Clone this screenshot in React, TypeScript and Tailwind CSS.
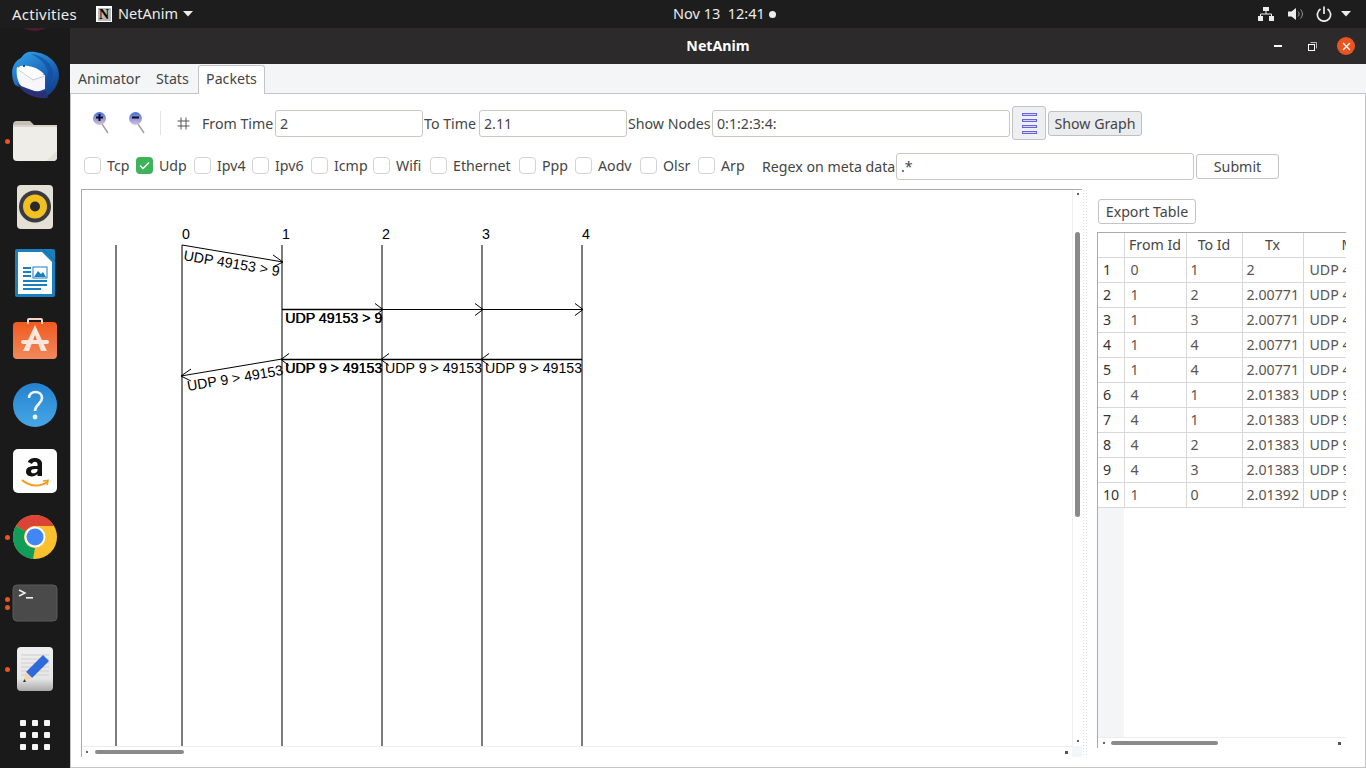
import React from "react";

const Dot = ({ y }: { y: string }) => (
  <span className={`absolute left-[5px] w-[5px] h-[5px] rounded-full bg-[#e95420] ${y}`} />
);

function Thunderbird() {
  return (
    <svg width="48" height="48" viewBox="0 0 48 48">
      <defs>
        <linearGradient id="tb" x1="0.2" y1="0" x2="0.8" y2="1"><stop offset="0" stopColor="#2f9fe6" /><stop offset="0.6" stopColor="#1b5fb4" /><stop offset="1" stopColor="#123a80" /></linearGradient>
      </defs>
      <path d="M17 1 C30 -1 48 8 48 24 C48 34 42 42 33 47 L22 42 L4 34 C-1 24 0 12 10 7 C12 4 14 2 17 1Z" fill="url(#tb)" />
      <path d="M20 3 C30 4 39 10 42 20 C42 30 38 38 34 43 L37 20 C33 10 26 6 20 3Z" fill="#0f4c9c" opacity="0.6" />
      <path d="M6 16 L23 21 L34 24 L34 38 L26 41 L10 35 C6 30 5 22 6 16Z" fill="#f7f7fb" />
      <path d="M8 19 L22 29 L34 25" fill="none" stroke="#c9c9dc" strokeWidth="1" />
      <path d="M9 15 C16 14 25 15 33 23 L22 28 L7 18Z" fill="#ffffff" />
      <path d="M6 32 C13 38 24 42 35 40 L37 47 C24 48 11 43 6 32Z" fill="#2a2f76" />
      <circle cx="13" cy="15" r="1" fill="#12264f" />
    </svg>
  );
}
function Files() {
  return (
    <svg width="46" height="42" viewBox="0 0 46 42">
      <path d="M1 5 a4 4 0 0 1 4-4 h13 l4 4 h20 a3 3 0 0 1 3 3 v4 H1Z" fill="#c5c0b3" />
      <rect x="1" y="5" width="44" height="36" rx="4" fill="#efede8" />
      <rect x="1" y="5" width="44" height="2" fill="#d8d4ca" />
      <path d="M34 41 L45 31 V37 a4 4 0 0 1-4 4Z" fill="#e3e0da" />
    </svg>
  );
}
function Rhythmbox() {
  return (
    <svg width="38" height="46" viewBox="0 0 38 46">
      <rect x="1" y="1" width="36" height="44" rx="4" fill="#e4e0d6" />
      <circle cx="19" cy="22.5" r="16" fill="#3a3a42" />
      <circle cx="19" cy="22.5" r="12" fill="#f0c11f" />
      <circle cx="19" cy="22.5" r="5" fill="#2a2a2a" />
    </svg>
  );
}
function Writer() {
  return (
    <svg width="40" height="48" viewBox="0 0 40 48">
      <path d="M2 0 H28 L40 12 V46 a2 2 0 0 1-2 2 H2 a2 2 0 0 1-2-2 V2 a2 2 0 0 1 2-2Z" fill="#1a7fbd" />
      <path d="M3 3 H27 L37 13 V45 H3Z" fill="#fdfdfd" />
      <path d="M28 0 H38 a2 2 0 0 1 2 2 V12Z" fill="#1a7fbd" />
      <rect x="8" y="18" width="8" height="2" fill="#1a7fbd" />
      <rect x="8" y="22" width="8" height="2" fill="#1a7fbd" />
      <rect x="8" y="26" width="8" height="2" fill="#1a7fbd" />
      <rect x="18" y="18" width="14" height="11" fill="#fff" stroke="#1a7fbd" />
      <path d="M19 28 L23 22 L26 25 L28 23 L31 28Z" fill="#1a7fbd" />
      <rect x="8" y="31" width="24" height="2" fill="#1a7fbd" />
      <rect x="8" y="35" width="24" height="2" fill="#1a7fbd" />
      <rect x="8" y="39" width="18" height="2" fill="#1a7fbd" />
    </svg>
  );
}
function Software() {
  return (
    <svg width="46" height="42" viewBox="0 0 46 42">
      <defs><linearGradient id="sw" x1="0" y1="0" x2="0" y2="1"><stop offset="0" stopColor="#f05a1e" /><stop offset="1" stopColor="#f0895c" /></linearGradient></defs>
      <rect x="1" y="4" width="44" height="37" rx="4" fill="url(#sw)" />
      <path d="M16 6 V2 a1 1 0 0 1 1-1 H29 a1 1 0 0 1 1 1 V6" fill="none" stroke="#f6d6c8" strokeWidth="2" />
      <path d="M23 7 L35 33 H29 L23 17 L17 33 H11 Z" fill="#fbe6dc" />
      <rect x="9" y="22" width="28" height="4" rx="2" fill="#fbe6dc" />
    </svg>
  );
}
function Help() {
  return (
    <svg width="46" height="46" viewBox="0 0 46 46">
      <defs><linearGradient id="hp" x1="0" y1="0" x2="0" y2="1"><stop offset="0" stopColor="#2482d0" /><stop offset="1" stopColor="#46a7e6" /></linearGradient></defs>
      <circle cx="23" cy="23" r="22" fill="url(#hp)" />
      <path d="M17 16 C17 8 30 8 30 16 C30 22 23 22 23 29" fill="none" stroke="#eef6fc" strokeWidth="2.6" />
      <circle cx="23" cy="35" r="2.4" fill="#eef6fc" />
    </svg>
  );
}
function Amazon() {
  return (
    <svg width="46" height="46" viewBox="0 0 46 46">
      <rect x="1" y="1" width="44" height="44" rx="5" fill="#fdfdfd" />
      <path d="M16 14 C17 9 29 8 30 15 V28 H25.5 V26 C22 30 14 29 14 23.5 C14 18 21 18 25.5 18 V16 C25 13 21 13 20 16Z M25.5 21 C22 21 19 21 19 23.5 C19 26 24 26 25.5 23Z" fill="#111" />
      <path d="M10 32 C18 39 28 39 35 34" fill="none" stroke="#f59c1a" strokeWidth="2" />
      <path d="M31 33 L36 32.5 L35 37" fill="none" stroke="#f59c1a" strokeWidth="1.6" />
    </svg>
  );
}
function Chrome() {
  return (
    <svg width="46" height="46" viewBox="0 0 46 46">
      <circle cx="23" cy="23" r="22" fill="#fbc02d" />
      <path d="M23 1 A22 22 0 0 1 42.05 12 H23 A11 11 0 0 0 13.5 17.5 L4 12 A22 22 0 0 1 23 1Z" fill="#db4437" />
      <path d="M4 12 L13.5 17.5 A11 11 0 0 0 23 34 L21 45 A22 22 0 0 1 4 12Z" fill="#0f9d58" />
      <circle cx="23" cy="23" r="10.5" fill="#fff" />
      <circle cx="23" cy="23" r="8.5" fill="#4285f4" />
    </svg>
  );
}
function Terminal() {
  return (
    <svg width="46" height="38" viewBox="0 0 46 38">
      <rect x="1" y="1" width="44" height="36" rx="4" fill="#4a4a4a" stroke="#5a5a5a" />
      <path d="M7 6 L13 9 L7 12" fill="none" stroke="#f0f0f0" strokeWidth="1.5" />
      <rect x="14" y="13" width="7" height="1.6" fill="#f0f0f0" />
    </svg>
  );
}
function Editor() {
  return (
    <svg width="38" height="46" viewBox="0 0 38 46">
      <defs><linearGradient id="ed" x1="0" y1="0" x2="0" y2="1"><stop offset="0" stopColor="#efefef" /><stop offset="0.72" stopColor="#e6e6e6" /><stop offset="1" stopColor="#a8a8a8" /></linearGradient></defs>
      <rect x="1" y="1" width="36" height="44" rx="4" fill="url(#ed)" />
      <path d="M5 9 H33 M5 13 H33 M5 17 H33 M5 21 H33 M5 25 H33 M5 29 H33" stroke="#cfcfcf" />
      <path d="M27 9 L33 15 L16 32 L10 26Z" fill="#2f6bd8" />
      <path d="M10 26 L16 32 L7 36Z" fill="#f3d3b0" />
      <path d="M8.5 33 L10 36 L7 36Z" fill="#333" />
    </svg>
  );
}
function AppGrid() {
  return (
    <div className="grid grid-cols-3 gap-x-[6px] gap-y-[6px]">
      {[0, 1, 2, 3, 4, 5, 6, 7, 8].map((i) => (
        <span key={i} className="w-[6px] h-[6px] rounded-[1px] bg-[#f5f5f5]" />
      ))}
    </div>
  );
}

function Lens({ minus }: { minus?: boolean }) {
  return (
    <svg width="18" height="24" viewBox="0 0 18 24">
      <defs><linearGradient id={minus ? "l2" : "l1"} x1="0" y1="0" x2="0" y2="1"><stop offset="0" stopColor="#4a6fd8" /><stop offset="1" stopColor="#d4c0dc" /></linearGradient></defs>
      <path d="M10 13 L16 22" stroke="#a89a9a" strokeWidth="1.4" />
      <circle cx="7.5" cy="7.5" r="6.5" fill={`url(#${minus ? "l2" : "l1"})`} />
      <path d={minus ? "M4 6.5 H11" : "M4 6.5 H11 M7.5 3 V10"} stroke="#0c0c24" strokeWidth="2" />
    </svg>
  );
}

const boxes = [
  { label: "Tcp", cls: "w-[52px]" },
  { label: "Udp", cls: "w-[58px]", on: true },
  { label: "Ipv4", cls: "w-[58px]" },
  { label: "Ipv6", cls: "w-[59px]" },
  { label: "Icmp", cls: "w-[62px]" },
  { label: "Wifi", cls: "w-[57px]" },
  { label: "Ethernet", cls: "w-[89px]" },
  { label: "Ppp", cls: "w-[56px]" },
  { label: "Aodv", cls: "w-[65px]" },
  { label: "Olsr", cls: "w-[58px]" },
  { label: "Arp", cls: "w-[64px]" },
];

const rows = [
  ["1", "0", "1", "2", "UDP 49153 > 9"],
  ["2", "1", "2", "2.00771", "UDP 49153 > 9"],
  ["3", "1", "3", "2.00771", "UDP 49153 > 9"],
  ["4", "1", "4", "2.00771", "UDP 49153 > 9"],
  ["5", "1", "4", "2.00771", "UDP 49153 > 9"],
  ["6", "4", "1", "2.01383", "UDP 9 > 49153"],
  ["7", "4", "1", "2.01383", "UDP 9 > 49153"],
  ["8", "4", "2", "2.01383", "UDP 9 > 49153"],
  ["9", "4", "3", "2.01383", "UDP 9 > 49153"],
  ["10", "1", "0", "2.01392", "UDP 9 > 49153"],
];

const cellPad = ["pl-[6px]", "pl-[4px]", "pl-[4px]", "pl-[6px]"];

const Field = ({ value, cls }: { value: string; cls: string }) => (
  <div className={`h-[27px] bg-white border border-[#cdc7c2] rounded-[3px] pl-[4px] flex items-center whitespace-nowrap ${cls}`}>{value}</div>
);

const mono = { fontFamily: "'Liberation Sans', sans-serif", fontSize: 14.2 } as const;

function Diagram() {
  const head = (x: number, y: number, dir: number) => (
    <path d={`M${x - 8 * dir} ${y - 6} L${x} ${y} L${x - 8 * dir} ${y + 6}`} fill="none" stroke="#000" />
  );
  return (
    <svg width="990" height="556" viewBox="82 190 990 556" className="block">
      {[116, 182, 282, 382, 482, 582].map((x) => (
        <line key={x} x1={x} y1="245" x2={x} y2="746" stroke="#7d7d7d" strokeWidth="2" />
      ))}
      {["0", "1", "2", "3", "4"].map((t, i) => (
        <text key={t} x={182 + i * 100} y="239" style={mono}>{t}</text>
      ))}
      <line x1="182" y1="245" x2="283" y2="262" stroke="#000" />
      <path d="M273 255 L283 262 L273 267" fill="none" stroke="#000" />
      <text transform="translate(183 260) rotate(9.6)" style={mono}>UDP 49153 &gt; 9</text>

      <line x1="282" y1="309.5" x2="582" y2="309.5" stroke="#000" />
      <line x1="282" y1="309.5" x2="382" y2="309.5" stroke="#000" strokeWidth="1.6" />
      {head(383, 309.5, 1)}
      {head(483, 309.5, 1)}
      {head(583, 309.5, 1)}
      <text x="285" y="323" style={mono}>UDP 49153 &gt; 9</text>
      <text x="285.4" y="323" style={mono}>UDP 49153 &gt; 9</text>

      <line x1="282" y1="359.5" x2="582" y2="359.5" stroke="#000" strokeWidth="1.6" />
      {head(481, 359.5, -1)}
      {head(381, 359.5, -1)}
      {head(281, 359.5, -1)}
      <text x="285" y="373" style={mono}>UDP 9 &gt; 49153</text>
      <text x="285.4" y="373" style={mono}>UDP 9 &gt; 49153</text>
      <text x="385" y="373" style={mono}>UDP 9 &gt; 49153</text>
      <text x="485" y="373" style={mono}>UDP 9 &gt; 49153</text>

      <line x1="282" y1="359" x2="181" y2="376" stroke="#000" />
      <path d="M191 369 L181 376 L191 381" fill="none" stroke="#000" />
      <text transform="translate(188 391) rotate(-9.6)" style={mono}>UDP 9 &gt; 49153</text>
    </svg>
  );
}

export default function App() {
  return (
    <div className="w-[1366px] h-[768px] overflow-hidden flex flex-col bg-[#1d1d1d] text-[#454545] text-[14.2px] [font-family:'Noto_Sans',sans-serif]">
      {/* top bar */}
      <div className="h-[28px] shrink-0 bg-[#1d1d1d] text-[#ececec] text-[14.5px] flex items-center relative">
        <span className="ml-[12px] w-[84px] text-[15px] tracking-[0.25px]">Activities</span>
        <span className="w-[16px] h-[16px] bg-white flex items-center justify-center">
          <span className="w-[13px] h-[13px] bg-[#b8b8b8] text-black text-[14px] leading-[13px] font-bold flex items-center justify-center [font-family:'Liberation_Serif',serif]">N</span>
        </span>
        <span className="ml-[6px]">NetAnim</span>
        <svg className="ml-[5px]" width="10" height="6" viewBox="0 0 10 6"><path d="M0 0 H10 L5 5.5Z" fill="#ececec" /></svg>
        <div className="absolute left-[673px] top-0 h-[28px] flex items-center whitespace-pre">
          <span>Nov 13  12:41</span>
          <span className="ml-[4px] w-[7px] h-[7px] rounded-full bg-[#ececec]" />
        </div>
        <div className="ml-auto mr-[15px] flex items-center">
          <svg width="16" height="14" viewBox="0 0 16 14" fill="#ececec"><rect x="5" y="0" width="6" height="4" /><rect x="0" y="9" width="5" height="5" /><rect x="11" y="9" width="5" height="5" /><path d="M8 4 V7 M2.5 9 V7 H13.5 V9" stroke="#ececec" fill="none" /></svg>
          <svg className="ml-[14px]" width="16" height="14" viewBox="0 0 16 14"><path d="M0 4.5 H3.5 L8 1 V13 L3.5 9.5 H0Z" fill="#ececec" /><path d="M10 4.5 C11.5 6 11.5 8 10 9.5 M12.5 2.5 C15 5 15 9 12.5 11.5" stroke="#ececec" fill="none" opacity="0.6" /></svg>
          <svg className="ml-[12px]" width="16" height="16" viewBox="0 0 16 16"><path d="M4.5 3 A6.6 6.6 0 1 0 11.5 3" fill="none" stroke="#ececec" strokeWidth="1.7" /><path d="M8 0.5 V8" stroke="#ececec" strokeWidth="1.7" /></svg>
          <svg className="ml-[9px]" width="10" height="6" viewBox="0 0 10 6"><path d="M0 0 H10 L5 5.5Z" fill="#ececec" /></svg>
        </div>
      </div>

      <div className="flex-1 flex min-h-0">
        {/* dock */}
        <div className="w-[70px] shrink-0 bg-[#1a1a1a] flex flex-col overflow-hidden relative">
          <div className="h-[66px] shrink-0 -mt-[52px] flex items-center justify-center"><span className="w-[44px] h-[44px] rounded-full bg-[#4a1c33]" /></div>
          {[
            <Thunderbird />, <Files />, <Rhythmbox />, <Writer />, <Software />, <Help />, <Amazon />, <Chrome />, <Terminal />, <Editor />, <AppGrid />,
          ].map((icon, i) => (
            <div key={i} className="h-[66px] shrink-0 flex items-center justify-center">{icon}</div>
          ))}
          <Dot y="top-[111px]" />
          <Dot y="top-[507px]" />
          <Dot y="top-[569px]" />
          <Dot y="top-[577px]" />
          <Dot y="top-[639px]" />
        </div>

        {/* window */}
        <div className="flex-1 flex flex-col min-w-0">
          <div className="h-[36px] shrink-0 bg-[#2c2a2b] text-white font-bold flex items-center relative pb-[1px]">
            <span className="mx-auto">NetAnim</span>
            <span className="absolute left-[1204px] top-[17px] w-[8px] h-[2px] bg-white" />
            <svg className="absolute left-[1238px] top-[14px]" width="9" height="9" viewBox="0 0 9 9"><path d="M2.5 0.5 H8.5 V6.5" fill="none" stroke="#bbb" /><rect x="0.5" y="2.5" width="6" height="6" fill="none" stroke="#fff" /></svg>
            <span className="absolute left-[1267px] top-[9px] w-[18px] h-[18px] rounded-full bg-[#e95420] flex items-center justify-center">
              <svg width="9" height="9" viewBox="0 0 9 9"><path d="M1 1 L8 8 M8 1 L1 8" stroke="#fff" strokeWidth="1.3" /></svg>
            </span>
          </div>

          {/* tabs */}
          <div className="h-[29px] shrink-0 bg-[#f4f5f6] flex items-end relative">
            <span className="ml-[8px] w-[78px] h-[28px] flex items-center">Animator</span>
            <span className="w-[42px] h-[28px] flex items-center">Stats</span>
            <span className="w-[67px] h-[29px] -mb-px bg-white border border-b-0 border-[#c3c3c8] rounded-t-[3px] flex items-center justify-center z-10 pb-[3px]">Packets</span>
          </div>

          {/* pane */}
          <div className="flex-1 min-h-0 bg-white border-l border-t border-b border-r border-[#c3c3c8] flex flex-col">
            <div className="h-[34px] mt-[12px] shrink-0 flex items-center">
              <span className="ml-[21px] w-[18px]"><Lens /></span>
              <span className="ml-[18px] w-[18px]"><Lens minus /></span>
              <span className="ml-[14px] w-px h-[24px] bg-[#e4e4e4]" />
              <svg className="ml-[16px]" width="13" height="13" viewBox="0 0 13 13"><path d="M4 0.5 V12.5 M9 0.5 V12.5 M0.5 4 H12.5 M0.5 9 H12.5" stroke="#555" /></svg>
              <span className="ml-[12px] w-[73px] pt-[2px] whitespace-nowrap">From Time</span>
              <Field value="2" cls="w-[148px] pt-[2px]" />
              <span className="ml-[1px] w-[55px] pt-[2px] whitespace-nowrap">To Time</span>
              <Field value="2.11" cls="w-[148px] pt-[2px]" />
              <span className="ml-[1px] w-[84px] pt-[2px] whitespace-nowrap">Show Nodes</span>
              <Field value="0:1:2:3:4:" cls="w-[298px] pt-[2px]" />
              <div className="ml-[2px] w-[34px] h-[34px] bg-[#eeeff0] border border-[#c3c3c8] rounded-[3px] flex flex-col items-center justify-center gap-[3px]">
                {[0, 1, 2, 3].map((i) => (
                  <span key={i} className="w-[15px] h-[3px] border border-[#6a62e0] bg-[#d6d4f4]" />
                ))}
              </div>
              <div className="ml-[2px] w-[94px] h-[25px] bg-[#ebecee] border border-[#bfc0c4] rounded-[3px] pt-[2px] flex items-center justify-center whitespace-nowrap">Show Graph</div>
            </div>

            <div className="h-[28px] mt-[12px] shrink-0 flex items-center pl-[13px]">
              {boxes.map((b) => (
                <div key={b.label} className={`flex items-center ${b.cls}`}>
                  {b.on ? (
                    <span className="w-[17px] h-[17px] rounded-[4px] bg-[#3eb35a] flex items-center justify-center">
                      <svg width="11" height="9" viewBox="0 0 11 9"><path d="M1 4.5 L4 7.5 L10 1.5" fill="none" stroke="#fff" strokeWidth="1.3" /></svg>
                    </span>
                  ) : (
                    <span className="w-[17px] h-[17px] rounded-[4px] bg-white border border-[#d3d3d6]" />
                  )}
                  <span className="ml-[6px] whitespace-nowrap">{b.label}</span>
                </div>
              ))}
              <span className="w-[134px] pt-[2px] whitespace-nowrap">Regex on meta data</span>
              <Field value=".*" cls="w-[298px] pt-[2px]" />
              <div className="ml-[2px] w-[83px] h-[25px] bg-white border border-[#c3c3c8] rounded-[3px] pt-[2px] flex items-center justify-center">Submit</div>
            </div>

            {/* lower area */}
            <div className="mt-[9px] flex-1 min-h-0 flex items-start pl-[10px]">
              <div className="w-[1001px] h-[568px] shrink-0 border-l border-t border-[#a9a9b0] flex flex-col">
                <div className="h-[556px] flex">
                  <Diagram />
                  <div className="w-[10px] border-l border-[#f0f0f0] flex flex-col items-center">
                    <span className="mt-[3px] w-[2px] h-[2px] bg-[#666]" />
                    <span className="mt-[37px] w-[5px] h-[285px] rounded-full bg-[#8a8a8a]" />
                    <span className="mt-auto mb-[4px] w-[2px] h-[2px] bg-[#666]" />
                  </div>
                </div>
                <div className="flex-1 flex">
                  <div className="w-[990px] border-t border-[#ececec] flex items-center pl-[4px]">
                    <span className="w-[2px] h-[2px] bg-[#666]" />
                    <span className="ml-[7px] w-[89px] h-[4px] rounded-full bg-[#8a8a8a]" />
                    <span className="ml-auto mr-[4px] w-[3px] h-[3px] bg-[#555]" />
                  </div>
                  <span className="w-[10px] bg-[#f4f5f6]" />
                </div>
              </div>
              <div className="w-[6px] h-[568px] shrink-0 bg-[radial-gradient(#dcdcdc_1px,transparent_1px)] bg-[length:3px_3px]" />
              <div className="ml-[9px] w-[249px] shrink-0 flex flex-col">
                <div className="mt-[10px] ml-[1px] w-[98px] h-[25px] bg-white border border-[#c3c3c8] rounded-[3px] flex items-center justify-center whitespace-nowrap">Export Table</div>
                <div className="mt-[8px] h-[516px] border-l border-t border-[#a9a9b0] flex flex-col overflow-hidden">
                  <table className="table-fixed w-[420px] border-collapse shrink-0">
                    <colgroup>
                      <col className="w-[26px]" />
                      <col className="w-[62px]" />
                      <col className="w-[56px]" />
                      <col className="w-[61px]" />
                      <col className="w-[215px]" />
                    </colgroup>
                    <thead>
                      <tr className="h-[24px]">
                        <th className="border-r border-b border-[#d8d8d8] font-normal" />
                        <th className="border-r border-b border-[#d8d8d8] font-normal">From Id</th>
                        <th className="border-r border-b border-[#d8d8d8] font-normal">To Id</th>
                        <th className="border-r border-b border-[#d8d8d8] font-normal">Tx</th>
                        <th className="border-b border-[#d8d8d8] font-normal text-left pl-[38px]">Meta Data</th>
                      </tr>
                    </thead>
                    <tbody>
                      {rows.map((r) => (
                        <tr key={r[0]} className="h-[25px]">
                          <td className="border-r border-b border-[#d8d8d8] pl-[5px] text-[#333]">{r[0]}</td>
                          {r.slice(1).map((c, i) => (
                            <td key={i} className={`border-r border-b border-[#d8d8d8] text-[#5c5450] whitespace-nowrap ${cellPad[i]}`}>{c}</td>
                          ))}
                        </tr>
                      ))}
                    </tbody>
                  </table>
                  <div className="flex-1 min-h-0">
                    <div className="w-[26px] h-full bg-[#f4f5f6]" />
                  </div>
                  <div className="h-[11px] shrink-0 border-t border-[#ececec] flex items-center pl-[5px]">
                    <span className="w-[2px] h-[2px] bg-[#666]" />
                    <span className="ml-[6px] w-[107px] h-[4px] rounded-full bg-[#8a8a8a]" />
                    <span className="ml-auto mr-[5px] w-[3px] h-[3px] bg-[#555]" />
                  </div>
                </div>
              </div>
            </div>
          </div>
        </div>
      </div>
    </div>
  );
}
